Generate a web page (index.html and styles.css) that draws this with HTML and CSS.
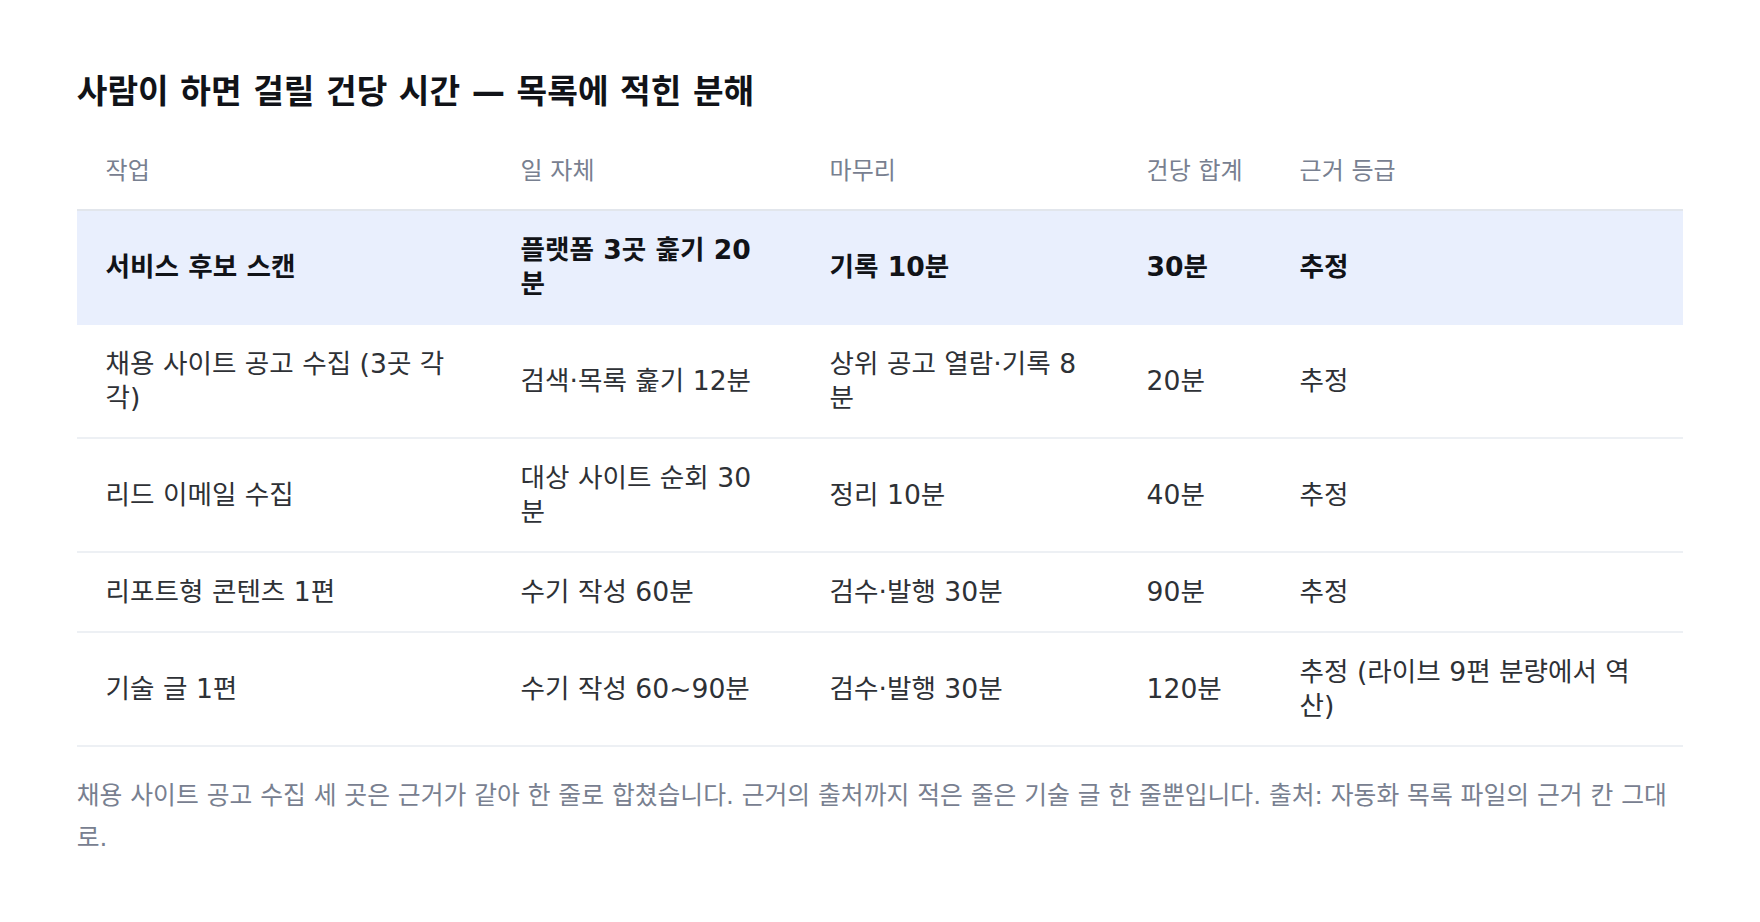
FILE: index.html
```html
<!DOCTYPE html>
<html lang="ko">
<head>
<meta charset="utf-8">
<title>사람이 하면 걸릴 건당 시간</title>
<link rel="stylesheet" href="styles.css">
</head>
<body>
<main class="page">
  <h1 class="title">사람이 하면 걸릴 건당 시간 — 목록에 적힌 분해</h1>
  <table class="breakdown">
    <colgroup>
      <col class="col-task">
      <col class="col-work">
      <col class="col-finish">
      <col class="col-total">
      <col class="col-grade">
    </colgroup>
    <thead>
      <tr>
        <th>작업</th>
        <th>일 자체</th>
        <th>마무리</th>
        <th>건당 합계</th>
        <th>근거 등급</th>
      </tr>
    </thead>
    <tbody>
      <tr class="is-highlight">
        <td>서비스 후보 스캔</td>
        <td>플랫폼 3곳 훑기 20분</td>
        <td>기록 10분</td>
        <td>30분</td>
        <td>추정</td>
      </tr>
      <tr>
        <td>채용 사이트 공고 수집 (3곳 각각)</td>
        <td>검색·목록 훑기 12분</td>
        <td>상위 공고 열람·기록 8분</td>
        <td>20분</td>
        <td>추정</td>
      </tr>
      <tr>
        <td>리드 이메일 수집</td>
        <td>대상 사이트 순회 30분</td>
        <td>정리 10분</td>
        <td>40분</td>
        <td>추정</td>
      </tr>
      <tr>
        <td>리포트형 콘텐츠 1편</td>
        <td>수기 작성 60분</td>
        <td>검수·발행 30분</td>
        <td>90분</td>
        <td>추정</td>
      </tr>
      <tr>
        <td>기술 글 1편</td>
        <td>수기 작성 60~90분</td>
        <td>검수·발행 30분</td>
        <td>120분</td>
        <td>추정 (라이브 9편 분량에서 역산)</td>
      </tr>
    </tbody>
  </table>
  <p class="note">채용 사이트 공고 수집 세 곳은 근거가 같아 한 줄로 합쳤습니다. 근거의 출처까지 적은 줄은 기술 글 한 줄뿐입니다. 출처: 자동화 목록 파일의 근거 칸 그대로.</p>
</main>
</body>
</html>
```
FILE: styles.css
```css
html, body {
  margin: 0;
  padding: 0;
  background: #ffffff;
}

body {
  font-family: "DejaVu Sans", "Noto Sans CJK KR", sans-serif;
  color: #2e3136;
}

.page {
  padding: 72px 76.8px 40px;
}

.title {
  margin: 0 0 24px;
  font-size: 33.3px;
  line-height: 40px;
  font-weight: 700;
  color: #111318;
}

.breakdown {
  width: 100%;
  border-collapse: collapse;
  table-layout: fixed;
}

.col-task { width: 415px; }
.col-work { width: 309px; }
.col-finish { width: 317px; }
.col-total { width: 153px; }
.col-grade { width: auto; }

.breakdown th {
  text-align: left;
  font-size: 24px;
  line-height: 34px;
  font-weight: 400;
  color: #788090;
  padding: 18px 28.8px 21px;
  border-bottom: 2px solid #e2e6ec;
  white-space: nowrap;
}

.breakdown td {
  font-size: 26.6px;
  line-height: 34px;
  color: #2e3136;
  padding: 22px 28.8px;
  border-bottom: 2px solid #edf0f4;
  vertical-align: middle;
}

.breakdown td:nth-child(2) {
  padding-right: 40px;
}

.breakdown .is-highlight td {
  background: #e9effd;
  border-bottom-color: #e9effd;
  font-weight: 700;
  color: #111318;
}

.note {
  margin: 28px 0 0;
  font-size: 24.8px;
  line-height: 42px;
  color: #788090;
}
```
